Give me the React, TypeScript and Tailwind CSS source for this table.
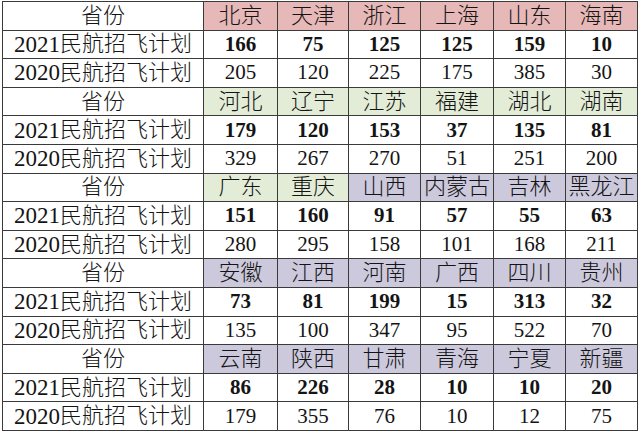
import { Fragment } from 'react';

const groups: { tone: string[]; names: string[]; y21: number[]; y20: number[] }[] = [
  {
    names: ['北京', '天津', '浙江', '上海', '山东', '海南'],
    tone: ['p', 'p', 'p', 'p', 'p', 'p'],
    y21: [166, 75, 125, 125, 159, 10],
    y20: [205, 120, 225, 175, 385, 30],
  },
  {
    names: ['河北', '辽宁', '江苏', '福建', '湖北', '湖南'],
    tone: ['g', 'g', 'g', 'g', 'g', 'g'],
    y21: [179, 120, 153, 37, 135, 81],
    y20: [329, 267, 270, 51, 251, 200],
  },
  {
    names: ['广东', '重庆', '山西', '内蒙古', '吉林', '黑龙江'],
    tone: ['g', 'g', 'v', 'v', 'v', 'v'],
    y21: [151, 160, 91, 57, 55, 63],
    y20: [280, 295, 158, 101, 168, 211],
  },
  {
    names: ['安徽', '江西', '河南', '广西', '四川', '贵州'],
    tone: ['v', 'v', 'v', 'v', 'v', 'v'],
    y21: [73, 81, 199, 15, 313, 32],
    y20: [135, 100, 347, 95, 522, 70],
  },
  {
    names: ['云南', '陕西', '甘肃', '青海', '宁夏', '新疆'],
    tone: ['v', 'v', 'v', 'v', 'v', 'v'],
    y21: [86, 226, 28, 10, 10, 20],
    y20: [179, 355, 76, 10, 12, 75],
  },
];

const toneClass: Record<string, string> = {
  p: 'bg-[#e6b9b8]',
  g: 'bg-[#e3ecd7]',
  v: 'bg-[#cdc9dd]',
};

const cjk = "font-['Liberation_Serif','Noto_Sans_CJK_SC',serif] font-light";
const num = "font-['Liberation_Serif',serif]";

export default function App() {
  return (
    <div className="w-[640px] h-[433px] bg-white pt-px pl-[2px]">
      <div className="grid grid-cols-[200px_73px_70px_71px_72px_71px_71px] grid-rows-[repeat(15,minmax(0,1fr))] gap-px p-px bg-[#3a3a3a] w-[636px] h-[430px] text-[#141414]">
        {groups.map((g, gi) => (
          <Fragment key={gi}>
            {/* header row */}
            <div className={`bg-white flex items-center justify-center text-[22px] leading-none ${cjk}`}>
              省份
            </div>
            {g.names.map((n, i) => (
              <div
                key={`n${i}`}
                className={`${toneClass[g.tone[i]]} flex items-center justify-center text-[22px] leading-none ${cjk}`}
              >
                {n}
              </div>
            ))}

            {/* 2021 */}
            <div className={`bg-white flex items-center justify-center text-[22px] leading-none ${cjk}`}>
              <span className={`${num} text-[23px]`}>2021</span>民航招飞计划
            </div>
            {g.y21.map((v, i) => (
              <div key={`a${i}`} className={`bg-white flex items-center justify-center text-[21px] font-bold leading-none ${num}`}>
                {v}
              </div>
            ))}

            {/* 2020 */}
            <div className={`bg-white flex items-center justify-center text-[22px] leading-none ${cjk}`}>
              <span className={`${num} text-[23px]`}>2020</span>民航招飞计划
            </div>
            {g.y20.map((v, i) => (
              <div key={`b${i}`} className={`bg-white flex items-center justify-center text-[21px] leading-none ${num}`}>
                {v}
              </div>
            ))}
          </Fragment>
        ))}
      </div>
    </div>
  );
}
